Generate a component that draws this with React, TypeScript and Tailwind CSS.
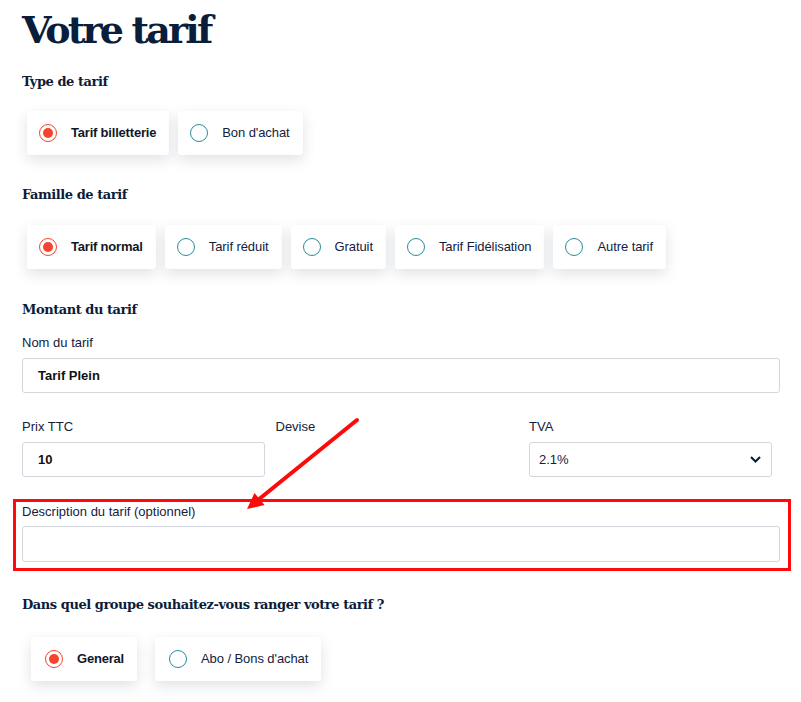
import React from "react";

const sans = { fontFamily: '"Liberation Sans", Arial, sans-serif' };
const serif = { fontFamily: '"DejaVu Serif", Georgia, serif' };

function Radio({ checked }: { checked: boolean }) {
  if (checked) {
    return (
      <span className="flex h-[18px] w-[18px] shrink-0 items-center justify-center rounded-full border-[1.5px] border-[#f4442e]">
        <span className="h-[10px] w-[10px] rounded-full bg-[#f4442e]" />
      </span>
    );
  }
  return <span className="h-[18px] w-[18px] shrink-0 rounded-full border-[1.5px] border-[#2a8d9c]" />;
}

function Card({ label, checked, wide }: { label: string; checked?: boolean; wide?: boolean }) {
  return (
    <div
      className={`flex h-[44px] items-center rounded-[3px] bg-white pr-[13px] shadow-[0_5px_14px_rgba(15,30,60,0.13)] ${
        wide ? "pl-[14px]" : "pl-[12px]"
      }`}
    >
      <Radio checked={!!checked} />
      <span
        className={`ml-[14px] whitespace-nowrap text-[13px] leading-[18px] ${
          checked ? "font-bold tracking-[-0.2px] text-[#101828]" : "tracking-[-0.08px] text-[#14213d]"
        }`}
        style={sans}
      >
        {label}
      </span>
    </div>
  );
}

function SectionTitle({ children, className }: { children: React.ReactNode; className?: string }) {
  return (
    <h2
      className={`text-[13px] font-bold leading-[20px] tracking-[-0.45px] text-[#0b1c38] ${className ?? ""}`}
      style={serif}
    >
      {children}
    </h2>
  );
}

function Label({ children }: { children: React.ReactNode }) {
  return (
    <div className="text-[13px] leading-[18px] text-[#14213d]" style={sans}>
      {children}
    </div>
  );
}

export default function App() {
  return (
    <div className="relative min-h-[702px] w-full overflow-hidden bg-white pl-[22px] pt-[6px]">
      <h1
        className="text-[38px] font-bold leading-[48px] tracking-[-2.8px] text-[#0a1d3a]"
        style={serif}
      >
        Votre tarif
      </h1>

      <SectionTitle className="mt-[18px]">Type de tarif</SectionTitle>
      <div className="ml-[5px] mt-[19px] flex gap-[9px]">
        <Card label="Tarif billetterie" checked />
        <Card label="Bon d'achat" />
      </div>

      <SectionTitle className="mt-[30px]">Famille de tarif</SectionTitle>
      <div className="ml-[5px] mt-[20px] flex gap-[9px]">
        <Card label="Tarif normal" checked />
        <Card label="Tarif réduit" />
        <Card label="Gratuit" />
        <Card label="Tarif Fidélisation" />
        <Card label="Autre tarif" />
      </div>

      <SectionTitle className="mt-[31px]">Montant du tarif</SectionTitle>
      <div className="mt-[14px]">
        <Label>Nom du tarif</Label>
        <div
          className="mt-[6px] flex h-[35px] w-[758px] items-center rounded-[3px] border border-[#d3d7dd] pl-[15px] text-[13px] font-bold text-[#111]"
          style={sans}
        >
          Tarif Plein
        </div>
      </div>

      <div className="mt-[25px] grid grid-cols-[243px_243px_243px] gap-x-[10.5px]">
        <div>
          <Label>Prix TTC</Label>
          <div
            className="mt-[6px] flex h-[35px] items-center rounded-[3px] border border-[#d3d7dd] pl-[15px] text-[13px] font-bold text-[#111]"
            style={sans}
          >
            10
          </div>
        </div>
        <div>
          <Label>Devise</Label>
        </div>
        <div>
          <Label>TVA</Label>
          <div
            className="mt-[6px] flex h-[35px] items-center justify-between rounded-[3px] border border-[#d3d7dd] pl-[9px] pr-[10px] text-[13px] text-[#14213d]"
            style={sans}
          >
            <span>2.1%</span>
            <svg width="11" height="7" viewBox="0 0 11 7" fill="none">
              <path d="M1 1l4.5 4.5L10 1" stroke="#0b1c38" strokeWidth="2" />
            </svg>
          </div>
        </div>
      </div>

      <div className="-ml-[9px] mt-[22px] w-[778px] border-[3px] border-[#ff0a0a] pb-[6px] pl-[6px] pr-[8px] pt-[1px]">
        <Label>Description du tarif (optionnel)</Label>
        <div className="mt-[5px] h-[36px] w-[758px] rounded-[3px] border border-[#d3d7dd]" />
      </div>

      <SectionTitle className="mt-[24px]">Dans quel groupe souhaitez-vous ranger votre tarif ?</SectionTitle>
      <div className="ml-[9px] mt-[22px] flex gap-[18px]">
        <Card label="General" checked wide />
        <Card label="Abo / Bons d'achat" wide />
      </div>

      <svg
        className="pointer-events-none absolute left-0 top-0"
        width="801"
        height="702"
        viewBox="0 0 801 702"
      >
        <line x1="357" y1="420" x2="258" y2="500" stroke="#ff0a0a" strokeWidth="4" strokeLinecap="round" />
        <polygon points="247,509 254.5,493 264.5,505" fill="#ff0a0a" />
      </svg>
    </div>
  );
}
